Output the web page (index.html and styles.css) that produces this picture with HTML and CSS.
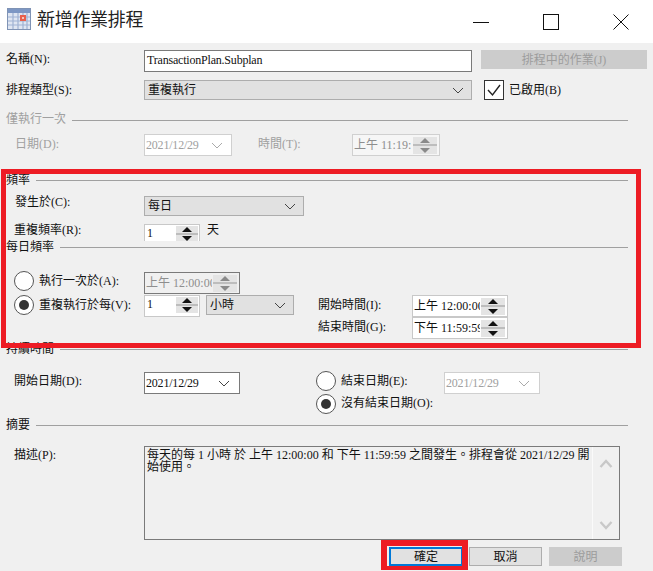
FILE: index.html
```html
<!DOCTYPE html>
<html lang="zh-Hant">
<head>
<meta charset="utf-8">
<title>新增作業排程</title>
<link rel="stylesheet" href="styles.css">
</head>
<body>
<div class="window">
  <header class="titlebar">
    <svg class="app-icon" width="24" height="22" viewBox="0 0 24 22">
      <rect x="0.5" y="0.5" width="23" height="21" fill="#dfe6f2" stroke="#7f93b5"/>
      <rect x="1" y="1" width="22" height="4" fill="#7d97c4"/>
      <path d="M6 5V21M11 5V21M16 5V21M20 5V21M1 9H23M1 13H23M1 17H23" stroke="#9fb2d3" stroke-width="1.2" fill="none"/>
      <rect x="13" y="7" width="6" height="6" fill="#e8604c"/>
      <rect x="15" y="9" width="2" height="2" fill="#f6c7b8"/>
    </svg>
    <h1 class="title">新增作業排程</h1>
    <div class="window-controls">
      <svg class="ctl ctl-min" width="16" height="16" viewBox="0 0 16 16"><path d="M0 8.5H16" stroke="#111" fill="none"/></svg>
      <svg class="ctl ctl-max" width="16" height="16" viewBox="0 0 16 16"><rect x="0.5" y="0.5" width="15" height="15" stroke="#111" fill="none"/></svg>
      <svg class="ctl" width="16" height="16" viewBox="0 0 16 16"><path d="M0.5 0.5L15.5 15.5M15.5 0.5L0.5 15.5" stroke="#111" fill="none"/></svg>
    </div>
  </header>

  <main class="form">
    <div class="row row-name">
      <label class="lbl lbl-top">名稱(N):</label>
      <div class="field input-name">TransactionPlan.Subplan</div>
      <button class="btn btn-jobs" disabled>排程中的作業(J)</button>
    </div>
    <div class="row row-type">
      <label class="lbl lbl-mid">排程類型(S):</label>
      <div class="combo combo-type"><span>重複執行</span><svg class="chev" width="12" height="7" viewBox="0 0 12 7"><path d="M1 1L6 6L11 1" stroke="#444" fill="none"/></svg></div>
      <span class="check"><svg width="18" height="18" viewBox="0 0 18 18"><path d="M3 9L7.5 14L15 4" stroke="#222" stroke-width="1.4" fill="none"/></svg></span>
      <span class="check-label">已啟用(B)</span>
    </div>

    <div class="head head-once muted"><span>僅執行一次</span><i class="rule"></i></div>
    <div class="row row-once muted">
      <label class="lbl lbl-indent-9 lbl-mid">日期(D):</label>
      <div class="date date-sm off"><span>2021/12/29</span><svg class="chev" width="12" height="7" viewBox="0 0 12 7"><path d="M1 1L6 6L11 1" stroke="#aaa" fill="none"/></svg></div>
      <label class="lbl-time">時間(T):</label>
      <div class="spin spin-wide off"><span class="spin-text">上午 11:19:</span><span class="arrows"><b class="up"></b><b class="down"></b></span></div>
    </div>

    <div class="head head-freq"><span>頻率</span><i class="rule"></i></div>
    <div class="row row-occurs">
      <label class="lbl lbl-indent-9 lbl-raise">發生於(C):</label>
      <div class="combo combo-occurs"><span>每日</span><svg class="chev" width="12" height="7" viewBox="0 0 12 7"><path d="M1 1L6 6L11 1" stroke="#444" fill="none"/></svg></div>
    </div>
    <div class="row row-repeat">
      <label class="lbl lbl-indent lbl-raise-2">重複頻率(R):</label>
      <div class="spin spin-num spin-clip"><span class="spin-text">1</span><span class="arrows on"><b class="up"></b><b class="down"></b></span></div>
      <span class="unit">天</span>
    </div>

    <div class="head head-tight"><span>每日頻率</span><i class="rule"></i></div>
    <div class="row row-once-at">
      <span class="radio"></span>
      <label class="radio-label">執行一次於(A):</label>
      <div class="spin spin-wide dim"><span class="spin-text">上午 12:00:00</span><span class="arrows"><b class="up"></b><b class="down"></b></span></div>
    </div>
    <div class="daily">
      <div class="radio-cell"><span class="radio checked"></span><label class="radio-label">重複執行於每(V):</label></div>
      <div class="spin spin-num"><span class="spin-text">1</span><span class="arrows on"><b class="up"></b><b class="down"></b></span></div>
      <div class="combo combo-hour"><span>小時</span><svg class="chev" width="12" height="7" viewBox="0 0 12 7"><path d="M1 1L6 6L11 1" stroke="#444" fill="none"/></svg></div>
      <label class="time-label">開始時間(I):</label>
      <div class="spin spin-time"><span class="spin-text">上午 12:00:00</span><span class="arrows on"><b class="up"></b><b class="down"></b></span></div>
      <label class="time-label time-end">結束時間(G):</label>
      <div class="spin spin-time spin-end"><span class="spin-text">下午 11:59:59</span><span class="arrows on"><b class="up"></b><b class="down"></b></span></div>
    </div>

    <div class="head head-duration"><span>持續時間</span><i class="rule"></i></div>
    <div class="duration">
      <label class="lbl lbl-indent lbl-top">開始日期(D):</label>
      <div class="date date-on"><span>2021/12/29</span><svg class="chev" width="12" height="7" viewBox="0 0 12 7"><path d="M1 1L6 6L11 1" stroke="#444" fill="none"/></svg></div>
      <div class="radio-cell end-radio"><span class="radio"></span><label class="radio-label">結束日期(E):</label></div>
      <div class="date off date-end"><span>2021/12/29</span><svg class="chev" width="12" height="7" viewBox="0 0 12 7"><path d="M1 1L6 6L11 1" stroke="#aaa" fill="none"/></svg></div>
      <div class="radio-cell no-end"><span class="radio checked"></span><label class="radio-label">沒有結束日期(O):</label></div>
    </div>

    <div class="head head-summary"><span>摘要</span><i class="rule"></i></div>
    <div class="row row-desc">
      <label class="lbl lbl-indent lbl-top">描述(P):</label>
      <div class="desc">
        <p class="desc-text">每天的每 1 小時 於 上午 12:00:00 和 下午 11:59:59 之間發生。排程會從 2021/12/29 開始使用。</p>
        <div class="scrollbar">
          <svg width="14" height="9" viewBox="0 0 14 9"><path d="M1.5 8L7 2L12.5 8" stroke="#c8c8c8" stroke-width="2.4" fill="none"/></svg>
          <svg width="14" height="9" viewBox="0 0 14 9"><path d="M1.5 1L7 7L12.5 1" stroke="#c8c8c8" stroke-width="2.4" fill="none"/></svg>
        </div>
      </div>
    </div>
    <div class="actions">
      <button class="btn btn-ok">確定</button>
      <button class="btn btn-cancel">取消</button>
      <button class="btn btn-help" disabled>說明</button>
    </div>
  </main>

  <div class="mark mark-freq"></div>
  <div class="mark mark-ok"></div>
</div>
</body>
</html>
```

FILE: styles.css
```css
* { box-sizing: border-box; }
html, body { margin: 0; padding: 0; }
body {
  width: 653px;
  height: 571px;
  overflow: hidden;
  background: #f0f0f0;
  color: #111;
  font: 12px/16px "Liberation Serif", "Noto Sans CJK TC", serif;
}
.window { position: relative; width: 653px; height: 571px; }

.titlebar { display: flex; align-items: center; height: 43px; background: #fff; padding: 0 0 5px 7px; }
.app-icon { flex: none; }
.title { margin: 2px 0 0 6px; font-size: 18px; font-weight: 400; line-height: 24px; color: #222; letter-spacing: -0.3px; }
.window-controls { display: flex; margin-left: auto; margin-right: 24px; }
.ctl { display: block; margin-top: 5px; }
.ctl-min { margin-right: 54px; }
.ctl-max { margin-right: 54px; }

.form { padding-top: 7px; }
.row { display: flex; align-items: flex-start; padding-left: 6px; }
.lbl { flex: none; width: 138px; }
.lbl-indent { padding-left: 8px; }
.lbl-indent-9 { padding-left: 9px; }
.lbl-top { padding-top: 1px; }
.lbl-mid { padding-top: 2px; }
.lbl-raise { margin-top: -2px; }
.lbl-raise-2 { margin-top: -2px; }
.muted { color: #a0a0a0; }

.row-name { height: 22px; }
.row-type { height: 20px; margin-top: 8px; }
.row-once { height: 22px; margin-top: 7px; }
.row-occurs { height: 20px; margin-top: 8px; }
.row-repeat { height: 17px; margin-top: 8px; }
.row-once-at { height: 24px; margin-top: 18px; padding-left: 14px; }
.row-desc { height: 94px; margin-top: 13px; }

.field { height: 22px; background: #fff; border: 1px solid #7a7a7a; padding: 1px 2px; }
.input-name { width: 328px; letter-spacing: -0.2px; }
.btn { font: inherit; padding: 0; color: #111; background: #e1e1e1; border: 1px solid #adadad; border-radius: 0; }
.btn:disabled { color: #9c9c9c; background: #ccc; border-color: #ccc; }
.btn-jobs { width: 166px; height: 19px; margin-left: 9px; }

.combo { display: flex; align-items: center; justify-content: space-between; height: 20px; background: #e1e1e1; border: 1px solid #adadad; padding: 0 7px 0 3px; }
.combo-type { width: 328px; }
.combo-occurs { width: 160px; }
.combo-hour { width: 88px; height: 20px; }
.chev { flex: none; }
.check { display: flex; align-items: center; justify-content: center; width: 20px; height: 20px; margin-left: 12px; background: #fff; border: 1px solid #333; }
.check-label { margin-left: 5px; padding-top: 2px; }

.head { display: flex; align-items: center; height: 16px; padding-left: 6px; padding-right: 25px; }
.head .rule { flex: 1; height: 1px; margin-left: 6px; background: #a0a0a0; }
.head-once { margin-top: 11px; }
.head-once .rule { margin-top: 2px; }
.head-freq { margin-top: 16px; }
.head-tight { height: 12px; }
.head-duration { margin-top: 2px; }
.head-summary { margin-top: 0; }

.date { display: flex; align-items: center; justify-content: space-between; height: 22px; border: 1px solid #7a7a7a; background: #fff; padding: 0 9px 0 1px; flex: none; letter-spacing: -0.2px; }
.date.off { color: #a0a0a0; border-color: #d0d0d0; }
.date-sm { width: 88px; }
.date-sm .chev { margin-right: -1px; }
.date-on, .date-end { width: 96px; }
.lbl-time { width: 120px; padding: 2px 0 0 26px; flex: none; }

.spin { display: flex; align-items: center; flex: none; height: 22px; background: #fff; border: 1px solid #c8c8c8; overflow: hidden; }
.spin-text { flex: 1; min-width: 0; margin-right: 1px; padding-left: 1px; white-space: nowrap; overflow: hidden; }
.spin-wide { width: 88px; }
.spin-wide.off { color: #8e8e8e; border-color: #d0d0d0; background: #f6f6f6; }
.spin-wide.dim { width: 96px; color: #8e8e8e; border-color: #7a7a7a; background: #f0f0f0; }
.spin-time { width: 96px; }
.arrows { display: flex; flex-direction: column; justify-content: space-between; align-items: center; flex: none; width: 24px; height: 17px; margin-right: 2px; padding: 1px 0; background: linear-gradient(#e4e4e4 0 7px, #bdbdbd 7px 9px, #e4e4e4 9px); }
.arrows b { display: block; width: 0; height: 0; border-left: 5px solid transparent; border-right: 5px solid transparent; }
.arrows .up { border-bottom: 5px solid #8a8a8a; }
.arrows .down { border-top: 5px solid #8a8a8a; }
.arrows.on .up { border-bottom-color: #111; }
.arrows.on .down { border-top-color: #111; }
.spin-num { width: 56px; align-items: flex-start; }
.spin-num .spin-text { padding-left: 2px; }
.spin-num .arrows { width: 22px; height: 16px; margin: 1px 1px 0 0; }
.spin-clip { height: 17px; border-bottom: 0; }
.unit { margin: -2px 0 0 7px; }

.radio { flex: none; position: relative; display: block; width: 20px; height: 20px; border: 1px solid #555; border-radius: 50%; background: #fff; }
.radio.checked::after { content: ""; position: absolute; left: 4px; top: 4px; width: 10px; height: 10px; border-radius: 50%; background: #333; }
.radio-label { margin-left: 5px; padding-top: 2px; white-space: nowrap; }
.row-once-at .radio-label { width: 105px; }
.row-once-at .spin { margin-top: 1px; }
.radio-cell { display: flex; align-items: flex-start; }

.daily { display: grid; grid-template-columns: 130px 56px 6px 88px 24px 94px 96px; grid-template-rows: 22px 22px; padding-left: 14px; }
.daily > .spin-num { grid-column: 2; }
.daily > .combo-hour { grid-column: 4; }
.time-label { grid-column: 6; padding-top: 2px; white-space: nowrap; }
.spin-time { grid-column: 7; }
.time-end { grid-row: 2; }
.spin-end { grid-row: 2; }

.duration { display: grid; grid-template-columns: 138px 96px 76px 128px 96px; grid-template-rows: 22px 23px; margin-top: 15px; padding-left: 6px; }
.end-radio { grid-column: 4; margin-top: -1px; }
.no-end { grid-column: 4; grid-row: 2; }
.no-end .radio-label { padding-top: 1px; }
.date-end { grid-column: 5; }

.desc { display: flex; width: 476px; height: 94px; border: 1px solid #7a7a7a; background: #f0f0f0; }
.desc-text { flex: 1; margin: 0; padding: 2px 2px; line-height: 12px; }
.scrollbar { display: flex; flex-direction: column; justify-content: space-between; align-items: center; flex: none; width: 27px; padding: 12px 0 9px; border-left: 1px solid #fafafa; }

.actions { display: flex; margin-top: 7px; padding-left: 389px; }
.actions .btn { height: 19px; }
.btn-ok { width: 74px; background: #e1e1e1; border: 2px solid #0078d7; }
.btn-cancel { width: 73px; margin-left: 6px; }
.btn-help { width: 73px; margin-left: 7px; }

.mark { position: absolute; border-style: solid; border-color: #ed1c24; pointer-events: none; }
.mark-freq { left: 1px; top: 169px; width: 640px; height: 179px; border-width: 5px; }
.mark-ok { left: 381px; top: 540px; width: 87px; height: 30px; border-width: 6px 6px 4px; }
```
